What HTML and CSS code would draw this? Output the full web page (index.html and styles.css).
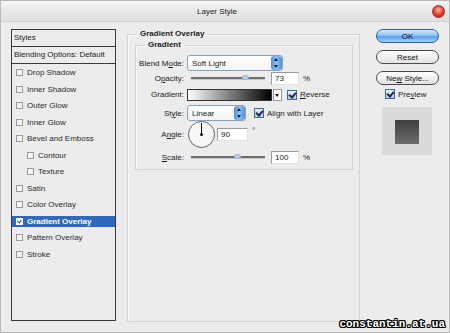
FILE: index.html
```html
<!DOCTYPE html>
<html>
<head>
  <link rel="stylesheet" href="styles.css">
</head>
<body>
  <div class="window">
    <div class="titlebar">
      <span class="title">Layer Style</span>
      <span class="close"></span>
    </div>

    <div class="content">
      <div class="styles-list">
        <div class="list-head">Styles</div>
        <div class="list-head">Blending Options: Default</div>
        <ul class="effects">
          <li><span class="cb"></span>Drop Shadow</li>
          <li><span class="cb"></span>Inner Shadow</li>
          <li><span class="cb"></span>Outer Glow</li>
          <li><span class="cb"></span>Inner Glow</li>
          <li><span class="cb"></span>Bevel and Emboss</li>
          <li class="sub"><span class="cb"></span>Contour</li>
          <li class="sub"><span class="cb"></span>Texture</li>
          <li><span class="cb"></span>Satin</li>
          <li><span class="cb"></span>Color Overlay</li>
          <li class="selected"><span class="cb on"></span>Gradient Overlay</li>
          <li><span class="cb"></span>Pattern Overlay</li>
          <li><span class="cb"></span>Stroke</li>
        </ul>
      </div>

      <fieldset class="group outer">
        <legend>Gradient Overlay</legend>
        <fieldset class="group inner">
          <legend>Gradient</legend>

          <div class="row r1">
            <label>Blend M<u>o</u>de:</label>
            <div class="select blend">Soft Light<span class="spin"></span></div>
          </div>

          <div class="row r2">
            <label>O<u>p</u>acity:</label>
            <div class="slider"><span class="thumb" style="left: 73%"></span></div>
            <div class="field num">73</div>
            <span class="unit">%</span>
          </div>

          <div class="row r3">
            <label>Gradient:</label>
            <div class="gradient"></div>
            <div class="drop"></div>
            <span class="check on"></span>
            <span class="check-label"><u>R</u>everse</span>
          </div>

          <div class="row r4">
            <label>St<u>y</u>le:</label>
            <div class="select style">Linear<span class="spin"></span></div>
            <span class="check on align"></span>
            <span class="check-label">Align with Layer</span>
          </div>

          <div class="row r5">
            <label>A<u>n</u>gle:</label>
            <div class="dial"><span class="hand"></span></div>
            <div class="field angle">90</div>
            <span class="deg">°</span>
          </div>

          <div class="row r6">
            <label><u>S</u>cale:</label>
            <div class="slider"><span class="thumb" style="left: 62%"></span></div>
            <div class="field num">100</div>
            <span class="unit">%</span>
          </div>
        </fieldset>
      </fieldset>

      <div class="actions">
        <button class="btn primary">OK</button>
        <button class="btn">Reset</button>
        <button class="btn">Ne<u>w</u> Style...</button>
        <div class="preview">
          <span class="check on"></span>
          <span class="check-label">Pre<u>v</u>iew</span>
        </div>
        <div class="swatch"><div class="swatch-inner"></div></div>
      </div>
    </div>

    <div class="watermark">constantin.at.ua</div>
  </div>
</body>
</html>
```

FILE: styles.css
```css
body {
  margin: 0;
  font-family: "Liberation Sans", Arial, sans-serif;
  font-size: 8px;
  color: #1a1a1a;
}
.window {
  position: relative;
  width: 450px;
  height: 333px;
  box-sizing: border-box;
  background: #ececec;
  border: 1px solid #b9b9b9;
  overflow: hidden;
}
.titlebar {
  height: 20px;
  display: flex;
  align-items: center;
  justify-content: center;
  padding-right: 16px;
  background: linear-gradient(#f4f4f4, #dedede);
  border-bottom: 1px solid #d2d2d2;
  position: relative;
}
.title {
  font-size: 8px;
  color: #222;
}
.close {
  position: absolute;
  right: 4px;
  top: 4px;
  width: 11px;
  height: 11px;
  border-radius: 50%;
  background: radial-gradient(circle at 50% 35%, #ffb0a0, #e8402c 55%, #a8180c);
  border: 1px solid #9a2a20;
}
.content {
  display: flex;
  align-items: flex-start;
}

/* left list */
.styles-list {
  margin: 7px 0 0 10px;
  width: 105px;
  height: 292px;
  box-sizing: border-box;
  border: 1px solid #3a3a3a;
  background: #ececec;
}
.list-head {
  height: 16px;
  line-height: 16px;
  padding-left: 2px;
  border-bottom: 1px solid #3a3a3a;
}
.effects {
  list-style: none;
  margin: 0;
  padding: 3px 0 0;
}
.effects li {
  height: 11px;
  margin-bottom: 5.5px;
  display: flex;
  align-items: center;
  padding-left: 4px;
  color: #2a2a2a;
}
.effects li.sub {
  padding-left: 15px;
}
.effects li.selected {
  background: #3167c0;
  color: #fff;
  font-weight: bold;
}
.cb {
  width: 5px;
  height: 5px;
  border: 1px solid #9a9a9a;
  background: #f4f4f4;
  margin-right: 4px;
  flex: none;
}
.cb.on {
  border-color: #fff;
  background: #fff;
  position: relative;
}
.cb.on::after {
  content: "";
  position: absolute;
  left: 1px;
  top: 0;
  width: 2px;
  height: 3px;
  border: solid #1f3f80;
  border-width: 0 1px 1px 0;
  transform: rotate(40deg);
}

/* group boxes */
.group {
  margin: 0;
  box-sizing: border-box;
  border: 1px solid #d2d2d2;
  box-shadow: inset 1px 1px 0 #fafafa;
  min-width: 0;
}
.group legend {
  font-weight: bold;
  color: #1a1a1a;
  padding: 0 3px;
}
.outer {
  margin: 7px 0 0 11px;
  width: 233px;
  height: 293px;
  padding: 0 6px 0 7px;
}
.outer > legend {
  line-height: 10px;
  margin-left: 2px;
}
.inner {
  width: 218px;
  height: 131px;
  padding: 4px 0 0;
}
.inner > legend {
  line-height: 12px;
  margin-left: 9px;
}

/* form rows */
.row {
  display: flex;
  align-items: center;
}
.row label {
  width: 48px;
  margin-right: 3px;
  text-align: right;
  flex: none;
}
.r1 { height: 16px; }
.r2 { height: 15px; }
.r3 { height: 17px; }
.r4 { height: 20px; }
.r5 { height: 23px; }
.r6 { height: 22px; }

.select {
  height: 16px;
  box-sizing: border-box;
  border: 1px solid #8aa2bd;
  border-radius: 3px;
  background: linear-gradient(#fff, #f3f3f3);
  padding-left: 4px;
  display: flex;
  align-items: center;
  justify-content: space-between;
}
.select.blend { width: 96px; }
.select.style { width: 59px; }
.spin {
  width: 11px;
  height: 14px;
  border-radius: 3px;
  background: linear-gradient(90deg, #4f8fd8, #8cc0f2 50%, #4f8fd8);
  position: relative;
}
.spin::before,
.spin::after {
  content: "";
  position: absolute;
  left: 3px;
  border: 2.5px solid transparent;
}
.spin::before {
  top: 0;
  border-bottom: 3px solid #10203a;
}
.spin::after {
  bottom: 0;
  border-top: 3px solid #10203a;
}

.slider {
  position: relative;
  width: 74px;
  height: 2px;
  margin-left: 4px;
  background: #6e6e6e;
  border-bottom: 1px solid #c8c8c8;
}
.thumb {
  position: absolute;
  top: -2px;
  width: 7px;
  height: 5px;
  margin-left: -3px;
  border-radius: 50%;
  background: radial-gradient(#cfe0f5, #7d9ec8);
}
.field {
  height: 13px;
  box-sizing: border-box;
  border: 1px solid #9a9a9a;
  border-right-color: #e2e2e2;
  border-bottom-color: #e2e2e2;
  background: #fff;
  line-height: 11px;
  padding-left: 3px;
}
.field.num {
  width: 28px;
  margin-left: 6px;
}
.field.angle {
  width: 31px;
  margin-left: 2px;
}
.unit {
  margin-left: 4px;
}
.deg {
  margin-left: 4px;
  align-self: flex-start;
  margin-top: 3px;
}

.gradient {
  width: 85px;
  height: 12px;
  box-sizing: border-box;
  border: 1px solid #333;
  background: linear-gradient(90deg, #fff, #000);
}
.drop {
  width: 9px;
  height: 12px;
  box-sizing: border-box;
  margin-left: 1px;
  border: 1px solid #9a9a9a;
  background: #fff;
  position: relative;
}
.drop::after {
  content: "";
  position: absolute;
  left: 1px;
  top: 4px;
  border: 2.5px solid transparent;
  border-top: 3px solid #111;
}
.check {
  width: 10px;
  height: 10px;
  box-sizing: border-box;
  border: 1px solid #3b6aa8;
  background: linear-gradient(#e8f0fa, #b7cde8);
  margin-left: 5px;
  position: relative;
  flex: none;
}
.check.on::after {
  content: "";
  position: absolute;
  left: 2px;
  top: 0;
  width: 3px;
  height: 5px;
  border: solid #1c2a44;
  border-width: 0 2px 2px 0;
  transform: rotate(40deg);
}
.check.align {
  margin-left: 8px;
}
.check-label {
  margin-left: 3px;
}

.dial {
  width: 27px;
  height: 27px;
  box-sizing: border-box;
  margin-left: 1px;
  border-radius: 50%;
  border: 1px solid #5d6670;
  background: radial-gradient(circle at 50% 45%, #f8f8f8 60%, #dfe2e6);
  position: relative;
}
.hand {
  position: absolute;
  left: 12px;
  top: 1px;
  width: 1px;
  height: 12px;
  background: #111;
}
.hand::after {
  content: "";
  position: absolute;
  left: -1px;
  bottom: -1px;
  width: 3px;
  height: 3px;
  border-radius: 50%;
  background: #111;
}

/* right column */
.actions {
  margin: 7px 0 0 16px;
  width: 63px;
  display: flex;
  flex-direction: column;
}
.btn {
  height: 14px;
  margin-bottom: 7px;
  padding: 0;
  font-family: "Liberation Sans", Arial, sans-serif;
  font-size: 8px;
  color: #111;
  border: 1px solid #4a4a4a;
  border-radius: 7px;
  background: linear-gradient(#ffffff, #f1f1f1 50%, #e2e2e2);
}
.btn.primary {
  border-color: #2f5f96;
  background: linear-gradient(#d6ebff, #8fc3f5 45%, #5aa0e8 55%, #9fd0ff);
}
.preview {
  height: 10px;
  display: flex;
  align-items: center;
  margin-top: -3px;
}
.preview .check {
  margin-left: 9px;
}
.swatch {
  margin: 8px 0 0 6px;
  width: 50px;
  height: 48px;
  background: #dadada;
  display: flex;
  align-items: center;
  justify-content: center;
}
.swatch-inner {
  width: 24px;
  height: 24px;
  margin-top: 1px;
  background: linear-gradient(#3e3e3e, #6c6c6c);
}

.watermark {
  position: absolute;
  right: 4px;
  bottom: 2px;
  font-family: "Liberation Mono", monospace;
  font-weight: bold;
  font-size: 11px;
  line-height: 11px;
  color: #fff;
  text-shadow: 1px 0 #000, -1px 0 #000, 0 1px #000, 0 -1px #000, 1px 1px #000, -1px -1px #000, 1px -1px #000, -1px 1px #000;
}
```
